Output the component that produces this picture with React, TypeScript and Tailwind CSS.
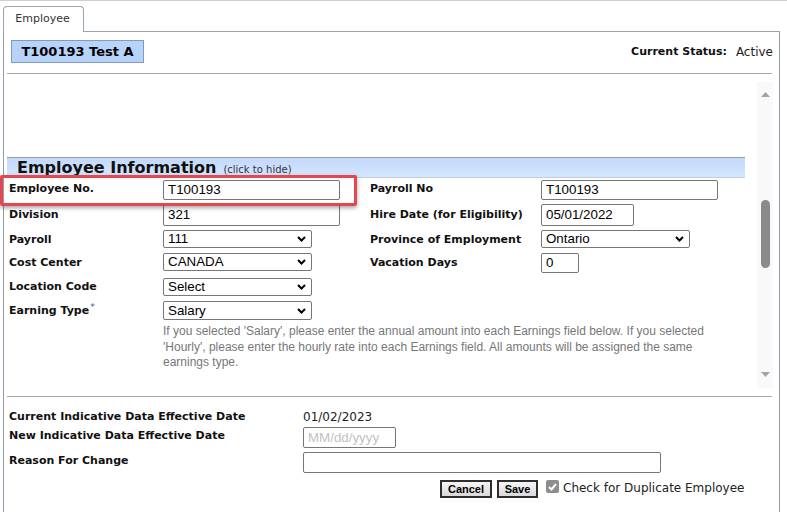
import React from 'react';

const label = "font-['DejaVu_Sans',sans-serif] text-[11px] leading-[13px] font-bold text-[#111]";
const ctrl = "font-['Liberation_Sans',Arial,sans-serif] text-[13.33px] text-black";

function TextBox({ w, h, value, placeholder }: { w: string; h: string; value?: string; placeholder?: string }) {
  return (
    <div className={`${w} ${h} flex items-center rounded-[2px] border border-[#767676] bg-white pl-[4px] ${ctrl}`}>
      {value ? value : <span className="text-[#c2c2c2]">{placeholder}</span>}
    </div>
  );
}

function Select({ w, h, value }: { w: string; h: string; value: string }) {
  return (
    <div className={`${w} ${h} flex items-center justify-between rounded-[2px] border border-[#767676] bg-white pl-[4px] pr-[5px] ${ctrl}`}>
      <span>{value}</span>
      <svg width="9" height="6" viewBox="0 0 9 6">
        <polyline points="1,1 4.5,4.5 8,1" fill="none" stroke="#000" strokeWidth="2" />
      </svg>
    </div>
  );
}

function Row({ h, left, leftCtl, right, rightCtl, pt }: {
  h: string; left: React.ReactNode; leftCtl: React.ReactNode; right?: string; rightCtl?: React.ReactNode; pt: string;
}) {
  return (
    <div className={`flex ${h}`}>
      <div className={`w-[156px] pl-[2px] ${pt} ${label}`}>{left}</div>
      <div className="w-[207px]">{leftCtl}</div>
      {right && <div className={`w-[171px] ${pt} ${label}`}>{right}</div>}
      {rightCtl && <div>{rightCtl}</div>}
    </div>
  );
}

export default function App() {
  return (
    <div className="relative flex h-[512px] w-[787px] flex-col overflow-hidden bg-white font-['DejaVu_Sans',sans-serif]">
      <div className="h-[6px] shrink-0 border-t border-[#cfcfcf]" />
      <div className="flex h-[26px] shrink-0">
        <div className="w-[3px]" />
        <div className="flex w-[81px] items-center justify-center rounded-t-[4px] border border-b-0 border-[#9aa4ad] pr-[2px] text-[11px] text-[#333]">
          Employee
        </div>
        <div className="w-[696px] border-b border-[#9aa4ad]" />
      </div>

      <div className="ml-[3px] flex w-[777px] flex-1 flex-col border-x border-[#8f9eab]">
        {/* header */}
        <div className="flex h-[41px] shrink-0 items-start justify-between">
          <div className="ml-[7px] mt-[8px] flex h-[23px] w-[133px] items-center justify-center border border-[#7f9bbd] bg-[#b8d3fa] text-[13px] font-bold text-black">
            T100193 Test A
          </div>
          <div className="mr-[6px] mt-[11px] flex items-center gap-[9px]">
            <span className="text-[11px] font-bold text-[#111]">Current Status:</span>
            <span className="text-[12px] text-[#222]">Active</span>
          </div>
        </div>
        <div className="ml-[3px] w-[765px] border-t border-[#a8a8a8]" />

        {/* scroll area */}
        <div className="ml-[3px] mt-[8px] flex h-[306px] w-[766px] shrink-0 overflow-hidden">
          <div className="w-[750px] pt-[75px]">
            <div className="flex h-[21px] w-[738px] items-end border-t border-b border-t-[#9a9a9a] border-b-[#c4cfdc] bg-gradient-to-b from-[#c3d9fb] to-[#d4e6ff] pl-[10px]">
              <span className="text-[16px] leading-[19px] font-bold text-[#111]">Employee Information</span>
              <span className="mb-[1px] ml-[7px] text-[10px] leading-[12px] text-[#334]">(click to hide)</span>
            </div>
            <div className="mt-[2px]">
              <Row h="h-[24px]" pt="pt-[2px]" left="Employee No." leftCtl={<TextBox w="w-[177px]" h="h-[20px]" value="T100193" />}
                right="Payroll No" rightCtl={<TextBox w="w-[177px]" h="h-[20px]" value="T100193" />} />
              <Row h="h-[26px]" pt="pt-[4px]" left="Division" leftCtl={<TextBox w="w-[177px]" h="h-[22px]" value="321" />}
                right="Hire Date (for Eligibility)" rightCtl={<TextBox w="w-[93px]" h="h-[22px]" value="05/01/2022" />} />
              <Row h="h-[23px]" pt="pt-[3px]" left="Payroll" leftCtl={<Select w="w-[149px]" h="h-[18px]" value="111" />}
                right="Province of Employment" rightCtl={<Select w="w-[149px]" h="h-[18px]" value="Ontario" />} />
              <Row h="h-[25px]" pt="pt-[3px]" left="Cost Center" leftCtl={<Select w="w-[149px]" h="h-[18px]" value="CANADA" />}
                right="Vacation Days" rightCtl={<TextBox w="w-[38px]" h="h-[20px]" value="0" />} />
              <Row h="h-[23px]" pt="pt-[2px]" left="Location Code" leftCtl={<Select w="w-[149px]" h="h-[18px]" value="Select" />} />
              <Row h="h-[20px]" pt="pt-[3px]"
                left={<>Earning Type<sup className="ml-[1px] text-[9px] font-normal text-[#35608f]">*</sup></>}
                leftCtl={<Select w="w-[149px]" h="h-[19px]" value="Salary" />} />
              <p className="mt-[3px] ml-[156px] w-[568px] font-['Liberation_Sans',Arial,sans-serif] text-[12px] leading-[15.5px] text-[#777]">
                If you selected 'Salary', please enter the annual amount into each Earnings field below. If you selected 'Hourly', please enter the hourly rate into each Earnings field. All amounts will be assigned the same earnings type.
              </p>
            </div>
          </div>
          {/* scrollbar */}
          <div className="flex w-[16px] flex-col items-center bg-[#f9f9f9] pt-[10px]">
            <svg width="9" height="5" viewBox="0 0 9 5"><polygon points="0,5 4.5,0 9,5" fill="#a3a3a3" /></svg>
            <div className="mt-[103px] h-[68px] w-[9px] rounded-full bg-[#8a8a8a]" />
            <div className="flex-1" />
            <svg className="mb-[11px]" width="9" height="5" viewBox="0 0 9 5"><polygon points="0,0 4.5,5 9,0" fill="#a3a3a3" /></svg>
          </div>
        </div>

        <div className="ml-[3px] mt-[8px] w-[765px] border-t border-[#a8a8a8]" />

        {/* bottom section */}
        <div className="mt-[13px] pl-[5px]">
          <div className="flex h-[17px]">
            <div className={`w-[294px] ${label}`}>Current Indicative Data Effective Date</div>
            <div className="text-[12px] leading-[14px] text-[#222]">01/02/2023</div>
          </div>
          <div className="flex h-[25px]">
            <div className={`w-[294px] pt-[2px] ${label}`}>New Indicative Data Effective Date</div>
            <TextBox w="w-[93px]" h="h-[21px]" placeholder="MM/dd/yyyy" />
          </div>
          <div className="flex h-[28px]">
            <div className={`w-[294px] pt-[2px] ${label}`}>Reason For Change</div>
            <TextBox w="w-[358px]" h="h-[21px]" value="" />
          </div>
        </div>
        <div className="flex h-[18px] items-start pl-[436px]">
          <button className="flex h-[18px] w-[52px] items-center justify-center border-2 border-[#2e2e2e] bg-gradient-to-b from-[#f6f6f6] to-[#d9d9d9] font-['Liberation_Sans',Arial,sans-serif] text-[11px] font-bold text-black">
            Cancel
          </button>
          <button className="ml-[5px] flex h-[18px] w-[41px] items-center justify-center border-2 border-[#2e2e2e] bg-gradient-to-b from-[#f6f6f6] to-[#d9d9d9] font-['Liberation_Sans',Arial,sans-serif] text-[11px] font-bold text-black">
            Save
          </button>
          <div className="ml-[8px] flex h-[13px] w-[13px] items-center justify-center rounded-[2px] bg-[#8d8d8d]">
            <svg width="9" height="8" viewBox="0 0 9 8">
              <polyline points="1,4 3.5,6.5 8,1" fill="none" stroke="#fff" strokeWidth="2" />
            </svg>
          </div>
          <span className="ml-[4px] mt-[1px] text-[12px] leading-[14px] text-[#222]">Check for Duplicate Employee</span>
        </div>
      </div>

      {/* highlight */}
      <div className="absolute left-0 top-[175px] h-[31px] w-[357px] rounded-[2px] border-[3px] border-[#e4474d] shadow-[0_2px_4px_rgba(0,0,0,0.35)]" />
    </div>
  );
}
